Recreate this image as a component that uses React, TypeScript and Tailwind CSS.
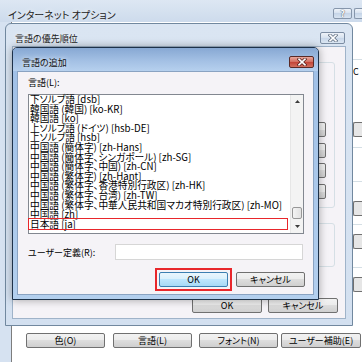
import React from 'react';

const font = "font-['Noto_Sans_CJK_JP','Noto_Sans',sans-serif] [font-feature-settings:'palt']";

const languages = [
  '下ソルブ語 [dsb]',
  '韓国語 (韓国) [ko-KR]',
  '韓国語 [ko]',
  '上ソルブ語 (ドイツ) [hsb-DE]',
  '上ソルブ語 [hsb]',
  '中国語 (簡体字) [zh-Hans]',
  '中国語 (簡体字、シンガポール) [zh-SG]',
  '中国語 (簡体字、中国) [zh-CN]',
  '中国語 (繁体字) [zh-Hant]',
  '中国語 (繁体字、香港特別行政区) [zh-HK]',
  '中国語 (繁体字、台湾) [zh-TW]',
  '中国語 (繁体字、中華人民共和国マカオ特別行政区) [zh-MO]',
  '中国語 [zh]',
  '日本語 [ja]',
];

const Btn = ({ children, className = '', primary = false }: { children?: React.ReactNode; className?: string; primary?: boolean }) => (
  <div
    className={`flex shrink-0 items-center justify-center rounded-[2px] border text-[9px] leading-none text-black ${
      primary
        ? 'border-[#3c7fb1] bg-[linear-gradient(#eaf6fd,#d9f0fc_50%,#bee6fd_50%,#a7d9f5)]'
        : 'border-[#707070] bg-[linear-gradient(#f2f2f2,#ebebeb_50%,#dddddd_50%,#cfcfcf)]'
    } ${className}`}
  >
    {children}
  </div>
);

const CloseX = ({ outline, fill }: { outline: string; fill: string }) => (
  <svg width="10" height="8" viewBox="0 0 10 8">
    <path d="M2 1.2 L8 6.8 M8 1.2 L2 6.8" stroke={outline} strokeWidth="3.2" strokeLinecap="square" />
    <path d="M2 1.2 L8 6.8 M8 1.2 L2 6.8" stroke={fill} strokeWidth="1.6" strokeLinecap="square" />
  </svg>
);

const Arrow = ({ down = false }: { down?: boolean }) => (
  <svg width="5" height="3" viewBox="0 0 5 3">
    <path d={down ? 'M0 0 H5 L2.5 3 Z' : 'M0 3 H5 L2.5 0 Z'} fill="#3b3b3b" />
  </svg>
);

export default function App() {
  return (
    <div className={`relative h-[362px] w-[362px] overflow-hidden bg-white text-black ${font}`}>
      {/* インターネット オプション (background window) */}
      <div className="flex h-full flex-col">
        <div className="flex h-[22px] shrink-0 items-start bg-[linear-gradient(#dde7f3,#cddbec)]">
          <span className="ml-[8px] mt-[10px] text-[10px] leading-none text-[#222] [text-shadow:0_0_5px_#fff]">
            インターネット オプション
          </span>
          <div className="ml-auto mt-[8px] flex">
            <div className="flex h-[11px] w-[19px] items-center justify-center rounded-[2px] border border-[#8696ab] bg-[linear-gradient(#eef3f9,#d5e0ee_50%,#c6d5e8_50%,#d8e4f1)] text-[9px] font-bold leading-none text-white [text-shadow:0_0_1px_#4d5a6b,0_0_1px_#4d5a6b]">
              ?
            </div>
            <div className="ml-[2px] h-[11px] w-[8px] rounded-l-[2px] border border-r-0 border-[#8696ab] bg-[linear-gradient(#eef3f9,#d5e0ee_50%,#c6d5e8_50%,#d8e4f1)]" />
          </div>
        </div>
        <div className="flex flex-1">
          <div className="w-[11px] shrink-0 bg-[#d6e2f1]" />
          <div className="flex flex-1 flex-col border-l border-[#7d7d7d] bg-white">
            <div className="flex flex-1">
              <div className="w-[341px] shrink-0" />
              <div className="flex flex-1 flex-col">
                <div className="mt-[37px] h-px bg-[#d5dfe5]" />
                <span className="mt-[7px] text-[9px] leading-none">C</span>
                <div className="mt-[46px] h-[15px] rounded-l-[2px] border border-r-0 border-[#707070] bg-[#e6e6e6]" />
                <div className="mt-[10px] h-px bg-[#d5dfe5]" />
                <div className="mt-[33px] h-px bg-[#d5dfe5]" />
                <div className="mt-[19px] h-[15px] rounded-l-[2px] border border-r-0 border-[#707070] bg-[#e6e6e6]" />
                <div className="mt-[8px] h-px bg-[#d5dfe5]" />
                <div className="mt-[9px] h-[15px] rounded-l-[2px] border border-r-0 border-[#707070] bg-[#e6e6e6]" />
                <div className="mt-[18px] h-px bg-[#d5dfe5]" />
                <div className="mt-[9px] h-[15px] rounded-l-[2px] border border-r-0 border-[#707070] bg-[#e6e6e6]" />
              </div>
            </div>
            <div className="mb-[14px] flex pl-[14px]">
              <Btn className="h-[15px] w-[79px]">色(O)</Btn>
              <Btn className="ml-[8px] h-[15px] w-[79px]">言語(L)</Btn>
              <Btn className="ml-[7px] h-[15px] w-[79px]">フォント(N)</Btn>
              <Btn className="ml-[3px] h-[15px] w-[80px]">ユーザー補助(E)</Btn>
            </div>
          </div>
        </div>
      </div>

      {/* 言語の優先順位 (inactive window) */}
      <div className="absolute left-[5px] top-[23px] flex h-[303px] w-[348px] flex-col rounded-t-[6px] border border-[#71889f] bg-[linear-gradient(#dae5f2,#d3e0f0)]">
        <div className="flex h-[22px] shrink-0 items-start">
          <span className="ml-[9px] mt-[10px] text-[9px] leading-none text-[#222] [text-shadow:0_0_5px_#fff]">言語の優先順位</span>
          <div className="ml-auto mr-[7px] mt-[8px] flex h-[12px] w-[25px] items-center justify-center rounded-[2px] border border-[#7c8da3] bg-[linear-gradient(#eef3f9,#d6e1ee_50%,#c7d6e9_50%,#dbe6f2)]">
            <CloseX outline="#5f6d80" fill="#ffffff" />
          </div>
        </div>
        <div className="mx-[6px] mb-[6px] flex flex-1 flex-col border border-[#9fb3c9] bg-[#f5f3f7] px-[10px]">
          <div className="mt-[15px] flex h-[146px] flex-col items-end rounded-[3px] border border-[#d5dfe5] pr-[8px] pt-[59px]">
            <Btn className="h-[15px] w-[60px]" />
            <Btn className="mt-[6px] h-[15px] w-[60px]" />
            <Btn className="mt-[5px] h-[15px] w-[60px]" />
            <Btn className="mt-[6px] h-[15px] w-[60px]" />
          </div>
          <div className="mt-[15px] h-[44px] rounded-[3px] border border-[#d5dfe5]" />
          <div className="mt-[31px] flex justify-end gap-[6px]">
            <Btn className="h-[15px] w-[70px]">OK</Btn>
            <Btn className="-mr-[3px] h-[15px] w-[70px]">キャンセル</Btn>
          </div>
        </div>
      </div>

      {/* 言語の追加 (active dialog) */}
      <div className="absolute left-[12px] top-[47px] flex h-[253px] w-[307px] flex-col rounded-t-[5px] border border-[#1d3149] bg-[linear-gradient(#9fbfe6,#b3cfee)] shadow-[0_0_8px_rgba(0,0,0,0.35)]">
        <div className="flex h-[23px] shrink-0 items-start rounded-t-[4px] bg-[linear-gradient(#87a8d3,#a3c0e4_55%,#b6d0ee)]">
          <span className="ml-[9px] mt-[10px] text-[9px] leading-none text-[#111] [text-shadow:0_0_5px_#fff]">言語の追加</span>
          <div className="ml-auto mr-[4px] mt-[8px] flex h-[12px] w-[25px] items-center justify-center rounded-[2px] border border-[#5a2a26] bg-[linear-gradient(#e9a89d,#d47264_45%,#c4473a_55%,#d2705f)]">
            <CloseX outline="#5b2420" fill="#ffffff" />
          </div>
        </div>
        <div className="mx-[4px] mb-[4px] flex flex-1 flex-col border border-[#8aa3c2] bg-[#f5f3f7] px-[10px] pt-[6px]">
          <span className="text-[9px] leading-[9px]">言語(L):</span>
          <div className="mt-[7px] flex h-[140px] w-[276px] border border-[#828790] bg-white">
            <div className="flex flex-1 flex-col overflow-visible pl-[1px] text-[9.7px] leading-[9.6px]">
              {languages.map((l, i) => (
                <div key={i} className="relative whitespace-nowrap">
                  {l}
                  {l === '日本語 [ja]' && (
                    <span className="absolute -bottom-[1px] -left-[2px] -top-[2px] right-[2px] border-[1.5px] border-[#e8262b]" />
                  )}
                </div>
              ))}
            </div>
            <div className="flex w-[13px] flex-col border-l border-[#e6e6e6] bg-[#f3f3f3]">
              <div className="flex h-[13px] items-center justify-center">
                <Arrow />
              </div>
              <div className="flex flex-1 flex-col justify-end px-[1px] pb-[1px]">
                <div className="h-[12px] rounded-[2px] border border-[#979797] bg-[linear-gradient(90deg,#f4f4f4,#e2e2e2)]" />
              </div>
              <div className="flex h-[13px] items-center justify-center">
                <Arrow down />
              </div>
            </div>
          </div>
          <div className="mt-[10px] flex items-center">
            <span className="w-[87px] text-[9px] leading-none">ユーザー定義(R):</span>
            <div className="h-[16px] w-[189px] border border-[#d6d6d6] bg-white" />
          </div>
          <div className="mt-[12px] flex justify-end gap-[8px]">
            <div className="relative">
              <Btn primary className="h-[15px] w-[69px]">
                OK
              </Btn>
              <span className="absolute -inset-[4px] border-2 border-[#e8262b]" />
            </div>
            <Btn className="-mr-[2px] h-[15px] w-[69px]">キャンセル</Btn>
          </div>
        </div>
      </div>
    </div>
  );
}
